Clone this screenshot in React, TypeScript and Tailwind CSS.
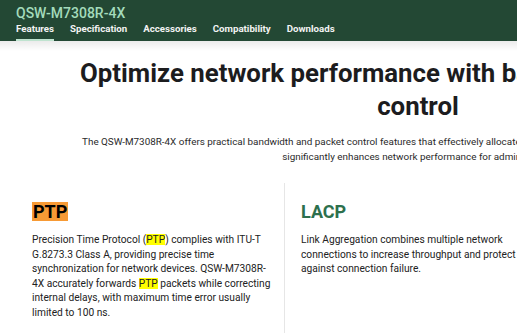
const tabs = ["Features", "Specification", "Accessories", "Compatibility", "Downloads"];

function Hit({ children }: { children: string }) {
  return <mark className="bg-[#ffff00] text-inherit">{children}</mark>;
}

export default function App() {
  return (
    <div className="w-screen overflow-hidden bg-white font-['Roboto',sans-serif]">
      <header className="bg-[#234834] px-4">
        <div className="pt-[4px] text-[14px] leading-[18px] font-medium text-[#a3dbbb]">QSW-M7308R-4X</div>
        <nav className="flex gap-4">
          {tabs.map((t, i) => (
            <div
              key={t}
              className={`pb-[3px] text-[9.7px] leading-[14px] font-bold text-[#f3f3f3] border-b-2 ${
                i === 0 ? "border-[#bfe3cf]" : "border-transparent"
              }`}
            >
              {t}
            </div>
          ))}
        </nav>
      </header>
      <div className="h-[10px] bg-linear-to-b from-[#ebebeb] to-white" />

      <main className="w-[836px]">
        <h1 className="mt-[6px] text-center text-[25.8px] leading-[33px] font-bold text-[#1c1c1e] whitespace-nowrap">
          Optimize network performance with bandwidth and packet
          <br />
          control
        </h1>
        <p className="mt-[11px] text-center text-[9.9px] leading-[15px] text-[#2a2a2a] whitespace-nowrap">
          The QSW-M7308R-4X offers practical bandwidth and packet control features that effectively allocate network
          resources and prioritize critical traffic, which
          <br />
          significantly enhances network performance for admin teams.
        </p>

        <section className="mt-[19px] grid grid-cols-3 px-4">
          <div className="px-4 pt-[19px] pb-6">
            <h2 className="text-[18px] leading-[19px] font-bold">
              <span className="inline-block bg-[#f79a35] px-[1px] text-black">PTP</span>
            </h2>
            <p className="mt-[12px] text-[10.2px] leading-[14.6px] text-[#222] whitespace-nowrap">
              Precision Time Protocol (<Hit>PTP</Hit>) complies with ITU-T
              <br />
              G.8273.3 Class A, providing precise time
              <br />
              synchronization for network devices. QSW-M7308R-
              <br />
              4X accurately forwards <Hit>PTP</Hit> packets while correcting
              <br />
              internal delays, with maximum time error usually
              <br />
              limited to 100 ns.
            </p>
          </div>
          <div className="border-l border-[#e6e6e6] px-4 pt-[19px] pb-6">
            <h2 className="text-[18px] leading-[19px] font-bold text-[#2d704d]">LACP</h2>
            <p className="mt-[12px] text-[10.2px] leading-[14.6px] text-[#222] whitespace-nowrap">
              Link Aggregation combines multiple network
              <br />
              connections to increase throughput and protect
              <br />
              against connection failure.
            </p>
          </div>
          <div className="border-l border-[#e6e6e6] px-4 pt-[19px] pb-6" />
        </section>
      </main>
    </div>
  );
}
